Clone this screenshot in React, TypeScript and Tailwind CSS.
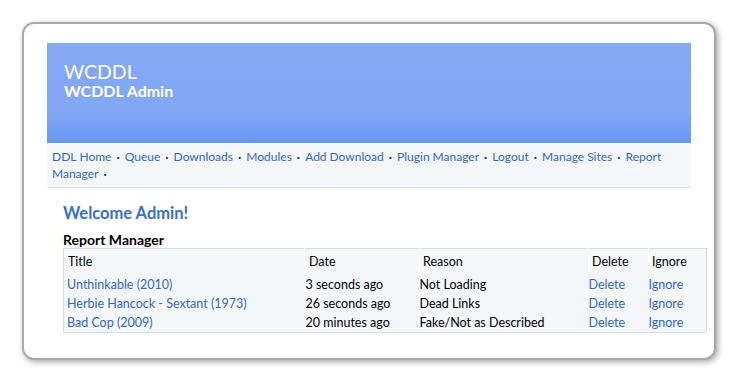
import React from "react";

const links = [
  "DDL Home",
  "Queue",
  "Downloads",
  "Modules",
  "Add Download",
  "Plugin Manager",
  "Logout",
  "Manage Sites",
  "Report Manager",
];

const reports = [
  { title: "Unthinkable (2010)", date: "3 seconds ago", reason: "Not Loading" },
  { title: "Herbie Hancock - Sextant (1973)", date: "26 seconds ago", reason: "Dead Links" },
  { title: "Bad Cop (2009)", date: "20 minutes ago", reason: "Fake/Not as Described" },
];

export default function App() {
  // split words so the last link can wrap like inline text
  const words: { w: string; dot: boolean }[] = [];
  links.forEach((l) => {
    const parts = l.split(" ");
    parts.forEach((p, i) => words.push({ w: p, dot: i === parts.length - 1 }));
  });

  return (
    <div
      className="min-h-[388px] w-[737px] bg-white pt-[22px] pl-[22px]"
      style={{ fontFamily: "Lato, 'Open Sans', sans-serif" }}
    >
      <div className="w-[694px] h-[338px] rounded-[12px] border-2 border-[#a8a8a8] bg-white shadow-[2px_2px_6px_rgba(0,0,0,0.35)] pt-[19px] pl-[23px]">
        {/* Header */}
        <div className="w-[644px] h-[100px] bg-gradient-to-b from-[#84a9f5] via-[#81a7f5] via-70% to-[#6896ef] pt-[19px] pl-[17px] text-white">
          <div className="text-[19.5px] leading-[20px]">WCDDL</div>
          <div className="text-[16px] leading-[17px] font-bold">WCDDL Admin</div>
        </div>

        {/* Nav */}
        <div className="w-[644px] h-[45px] bg-[#f4f7fa] border-b border-[#dddddd] pl-[5px] pr-[15px] pt-[5px] flex flex-wrap content-start text-[12px] leading-[17px] text-[#3566c7]">
          {words.map((x, i) => (
            <div key={i} className="flex">
              <span className={x.dot ? "" : "mr-[3px]"}>{x.w}</span>
              {x.dot && <span className="mx-[5px] text-[#333] font-bold">{"\u00b7"}</span>}
            </div>
          ))}
        </div>

        {/* Content */}
        <div className="pl-[16px] pt-[15px]">
          <div className="text-[16.5px] leading-[20px] font-bold text-[#3a6fc8]">Welcome Admin!</div>
          <div className="mt-[9px] text-[14px] leading-[16px] font-bold text-black">Report Manager</div>
          <table className="w-[644px] border border-[#dddddd] bg-[#f4f7fa] text-[12.5px] leading-[19px] border-collapse">
            <thead>
              <tr className="h-[26px] text-black">
                <th className="w-[241px] text-left font-normal pl-[4px] border-r border-white">Title</th>
                <th className="w-[115px] text-left font-normal pl-[4px] border-r border-white">Date</th>
                <th className="w-[169px] text-left font-normal pl-[3px] border-r border-white">Reason</th>
                <th className="w-[60px] text-left font-normal pl-[3px] border-r border-white">Delete</th>
                <th className="text-left font-normal pl-[3px]">Ignore</th>
              </tr>
            </thead>
            <tbody>
              {reports.map((r) => (
                <tr key={r.title}>
                  <td className="pl-[3px] text-[#3566c7]">{r.title}</td>
                  <td className="pl-[1px] text-black">{r.date}</td>
                  <td className="text-black">{r.reason}</td>
                  <td className="text-[#3566c7]">Delete</td>
                  <td className="text-[#3566c7]">Ignore</td>
                </tr>
              ))}
            </tbody>
          </table>
        </div>
      </div>
    </div>
  );
}
